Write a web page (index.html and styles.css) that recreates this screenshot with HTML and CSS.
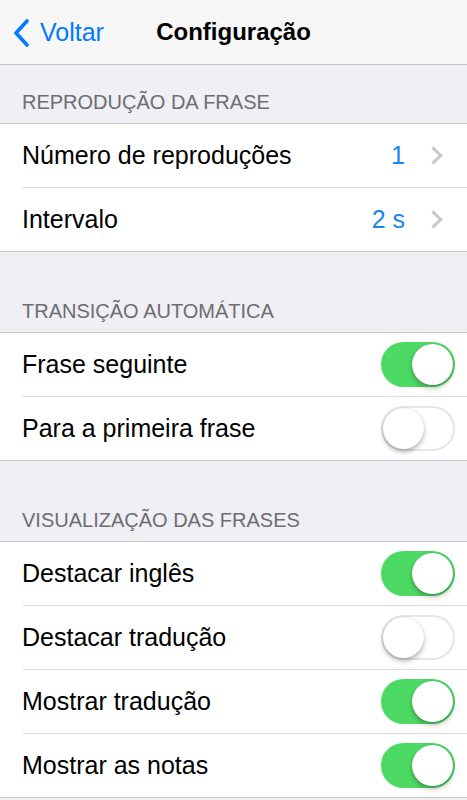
FILE: index.html
```html
<!DOCTYPE html>
<html lang="pt">
<head>
    <meta charset="UTF-8">
    <meta name="viewport" content="width=device-width, initial-scale=1.0">
    <title>Configuração</title>
    <link rel="stylesheet" href="styles.css">
</head>
<body>

<div class="navbar">
    <a class="back" href="#">
        <svg class="back-icon" width="18" height="28" viewBox="0 0 18 28">
            <path d="M15 2 L4 14 L15 26" fill="none" stroke="#007aff" stroke-width="3.6" stroke-linecap="round" stroke-linejoin="round"/>
        </svg>
        <span>Voltar</span>
    </a>
    <h1 class="title">Configuração</h1>
</div>

<div class="section-header first">REPRODUÇÃO DA FRASE</div>
<ul class="group">
    <li class="row">
        <span class="label">Número de reproduções</span>
        <span class="value">1</span>
        <span class="chevron"></span>
    </li>
    <li class="row">
        <span class="label">Intervalo</span>
        <span class="value">2 s</span>
        <span class="chevron"></span>
    </li>
</ul>

<div class="section-header">TRANSIÇÃO AUTOMÁTICA</div>
<ul class="group">
    <li class="row">
        <span class="label">Frase seguinte</span>
        <span class="switch on"></span>
    </li>
    <li class="row">
        <span class="label">Para a primeira frase</span>
        <span class="switch"></span>
    </li>
</ul>

<div class="section-header">VISUALIZAÇÃO DAS FRASES</div>
<ul class="group">
    <li class="row">
        <span class="label">Destacar inglês</span>
        <span class="switch on"></span>
    </li>
    <li class="row">
        <span class="label">Destacar tradução</span>
        <span class="switch"></span>
    </li>
    <li class="row">
        <span class="label">Mostrar tradução</span>
        <span class="switch on"></span>
    </li>
    <li class="row">
        <span class="label">Mostrar as notas</span>
        <span class="switch on"></span>
    </li>
</ul>

</body>
</html>
```

FILE: styles.css
```css
body {
    margin: 0;
    background-color: #efeff4;
    font-family: 'Liberation Sans', Arial, sans-serif;
    color: #000;
}
.navbar {
    height: 64px;
    background-color: #f7f7f8;
    border-bottom: 1px solid #c4c4c8;
    display: flex;
    align-items: center;
    justify-content: center;
    position: relative;
}
.back {
    position: absolute;
    left: 12px;
    top: 18px;
    display: flex;
    align-items: center;
    gap: 10px;
    color: #007aff;
    text-decoration: none;
    font-size: 25px;
}
.title {
    margin: 0;
    font-size: 24px;
    font-weight: bold;
}
.section-header {
    padding: 47px 22px 9px;
    font-size: 20px;
    color: #6d6d72;
    line-height: 24px;
}
.section-header.first {
    padding-top: 25px;
}
.group {
    list-style: none;
    margin: 0;
    padding: 0 0 0 22px;
    background: #fff;
    border-top: 1px solid #c8c7cc;
    border-bottom: 1px solid #c8c7cc;
}
.row {
    height: 63px;
    display: flex;
    align-items: center;
    padding-right: 12px;
    border-bottom: 1px solid #dedee2;
    font-size: 25px;
}
.row:last-child {
    border-bottom: none;
}
.label {
    flex: 1;
}
.value {
    color: #1a85f0;
    margin-right: 22px;
}
.chevron {
    width: 10px;
    height: 10px;
    border-right: 3px solid #c7c7cc;
    border-top: 3px solid #c7c7cc;
    transform: rotate(45deg);
    margin-right: 15px;
}
.switch {
    width: 70px;
    height: 41px;
    border-radius: 23px;
    border: 2px solid #e5e5ea;
    background: #fff;
    position: relative;
}
.switch::after {
    content: '';
    position: absolute;
    top: 0;
    left: 0;
    width: 41px;
    height: 41px;
    border-radius: 50%;
    background: #fff;
    box-shadow: 0 3px 5px rgba(0,0,0,0.28), 0 0 1px rgba(0,0,0,0.2);
}
.switch.on {
    background: #4cd964;
    border-color: #4cd964;
}
.switch.on::after {
    left: 29px;
}
```
